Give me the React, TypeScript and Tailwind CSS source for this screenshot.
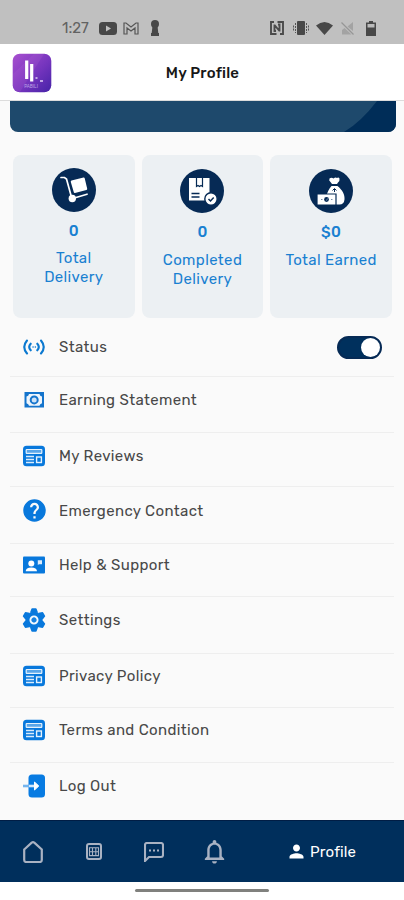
import { ReactNode, useState } from "react";
import { MdHelp, MdNotificationsNone, MdPerson } from "react-icons/md";

interface StatCard {
  value: string;
  label: ReactNode;
  icon: ReactNode;
  className: string;
  labelClass: string;
}

interface MenuItem {
  label: string;
  icon: ReactNode;
  rowClass: string;
  innerClass: string;
}

const TrolleyIcon = () => (
  <svg viewBox="0 0 44 44" className="size-11" fill="none">
    <path d="M9 9.5h3.5l2 1.5 5.5 20" stroke="#fff" strokeWidth="1.7" strokeLinecap="round" />
    <path d="M19.500 12.500 31.500 9.500q1-.2 1.200.8l2.500 10.500q.2 1-.8 1.300L23 25q-1 .2-1.200-.8L18.800 14q-.2-1.200.7-1.500Z" fill="#fff" />
    <path d="m24 29.500 11-3.300" stroke="#fff" strokeWidth="1.700" strokeLinecap="round" />
    <circle cx="20.300" cy="30.500" r="3.700" fill="#fff" />
  </svg>
);

const ParcelIcon = () => (
  <svg viewBox="0 0 44 44" className="size-11" fill="none">
    <path d="M9 9h20.500v22.500H9z" fill="#fff" />
    <path d="M16.500 9v8.500l1.500-1 1.500 1 1.500-1 1.500 1V9" stroke="#062a55" strokeWidth="1.200" />
    <path d="M11.500 24.500h8M11.500 28h8" stroke="#062a55" strokeWidth="1.300" />
    <circle cx="31" cy="30" r="6.200" fill="#fff" stroke="#062a55" strokeWidth="1.400" />
    <path d="m28.500 30 2 2 3.200-3.500" stroke="#062a55" strokeWidth="1.500" />
  </svg>
);

const MoneyIcon = () => (
  <svg viewBox="0 0 44 44" className="size-11" fill="none">
    <path d="M20.500 9.500q2-1.500 4 0 2-1.500 3.500-.5 1.500-1 2.500.5.500 2-1.500 4l-1 1.500h-5l-1.500-2q-2-1.500-1-3.500Z" fill="#fff" />
    <path d="M22.500 17h6c5 4 7.500 9 7 13.500q-.5 5-5 5H21c-4 0-5-3-4-7 1-5 3-8.500 5.500-11.500Z" fill="#fff" />
    <path d="m23.500 21.500 2-2 2 2M25.500 20v3" stroke="#062a55" />
    <path d="M8 25h19v11H8z" fill="#fff" stroke="#062a55" strokeWidth="1.200" />
    <circle cx="17.500" cy="30.500" r="2.400" fill="#062a55" />
    <path d="m18.500 29.500-1 2M12 30.500h1.500M22 30.500h1.500" stroke="#7690aa" />
  </svg>
);

const SignalIcon = () => (
  <svg viewBox="0 0 22 22" className="size-[22px]" fill="none" stroke="#0b79d0" strokeWidth="2.100" strokeLinecap="round">
    <path d="M4 4.500q-5.500 6.500 0 13M18 4.500q5.500 6.500 0 13M7.700 7.700q-3 3.300 0 6.600M14.300 7.700q3 3.300 0 6.600" />
    <path d="M10 11h.1M12.300 11h.1" strokeWidth="1.500" />
  </svg>
);

const BanknoteIcon = () => (
  <svg viewBox="0 0 22 22" className="size-[22px]" fill="none">
    <path d="M1.500 3h19.500v15.500h-19.500z" fill="#1474cc" />
    <path d="M6 5h10.500q.3 2 2.500 2.500v6.800q-2.200.5-2.500 2.500H6q-.3-2-2.500-2.500V7.500Q5.700 7 6 5Z" fill="#eef5fc" />
    <circle cx="11.200" cy="10.900" r="3.500" fill="#cfe3f7" stroke="#1474cc" strokeWidth="2" />
  </svg>
);

const NewsIcon = () => (
  <svg viewBox="0 0 22 22" className="size-[22px]" fill="none">
    <rect width="22" height="20.500" y=".8" rx="3.500" fill="#0878dc" />
    <rect x="3.200" y="4.500" width="15.600" height="3.800" rx=".6" fill="#5aa6e9" stroke="#e5f2fd" strokeWidth="1.200" />
    <path d="M3 11.500h8M3 14.500h8M3 17.500h8" stroke="#d9ebfb" strokeWidth="1.300" />
    <rect x="13.600" y="12" width="4.800" height="5.500" stroke="#e5f2fd" strokeWidth="1.400" />
  </svg>
);

const ContactCardIcon = () => (
  <svg viewBox="0 0 22 22" className="size-[22px]" fill="#fff">
    <path d="M1 2.500h20q1 0 1 1v15q0 1-1 1H1q-1 0-1-1v-15q0-1 1-1Z" fill="#0878dc" />
    <circle cx="8.300" cy="9.500" r="3" />
    <path d="M2.700 17.300q0-3.800 5.600-3.800t5.700 3.800Z" />
    <path d="M14.800 6.200h4.200v4h-3l-1.200.8Z" fill="#dcecfb" />
  </svg>
);

const GearIcon = () => (
  <svg viewBox="-12 -12 24 24" className="size-6 shrink-0" fill="#0878dc">
    <circle r="8.600" />
    {[0, 60, 120, 180, 240, 300].map((angle) => (
      <path key={angle} d="M-4-7.500-2.600-11.300q.2-.4.700-.4h3.800q.5 0 .7.4L4-7.500Z" transform={`rotate(${angle})`} />
    ))}
    <circle r="3.600" fill="#1681df" stroke="#f2f8fe" strokeWidth="1.900" />
  </svg>
);

const LogOutIcon = () => (
  <svg viewBox="0 0 22 24" className="h-6 w-[22px]" fill="none">
    <rect x="5.500" y=".5" width="16.500" height="23" rx="3.500" fill="#087be2" />
    <path d="M0 12h6" stroke="#75b5ef" strokeWidth="2.600" />
    <path d="M6 12h7" stroke="#d5eafd" strokeWidth="2.600" />
    <path d="m11.500 8 4.300 4-4.300 4Z" fill="#fff" stroke="#fff" />
  </svg>
);

const stats: StatCard[] = [
  { value: "0", label: <>Total<br />Delivery</>, icon: <TrolleyIcon />, className: "pt-[13px]", labelClass: "mt-2" },
  { value: "0", label: "Completed Delivery", icon: <ParcelIcon />, className: "pt-3.5", labelClass: "mt-[9px]" },
  { value: "$0", label: "Total Earned", icon: <MoneyIcon />, className: "pt-3.5", labelClass: "mt-[9px]" },
];

const menuItems: MenuItem[] = [
  { label: "Earning Statement", icon: <BanknoteIcon />, rowClass: "h-14", innerClass: "h-[46px]" },
  { label: "My Reviews", icon: <NewsIcon />, rowClass: "h-[54px]", innerClass: "h-[45px]" },
  {
    label: "Emergency Contact",
    icon: <MdHelp className="size-[27px] shrink-0 text-[#0878dc]" />,
    rowClass: "h-[57px]",
    innerClass: "h-[47px]",
  },
  { label: "Help & Support", icon: <ContactCardIcon />, rowClass: "h-[53px]", innerClass: "h-[42px]" },
  { label: "Settings", icon: <GearIcon />, rowClass: "h-[57px]", innerClass: "h-[46px]" },
  { label: "Privacy Policy", icon: <NewsIcon />, rowClass: "h-[54px]", innerClass: "h-11" },
  { label: "Terms and Condition", icon: <NewsIcon />, rowClass: "h-[55px]", innerClass: "h-11" },
  { label: "Log Out", icon: <LogOutIcon />, rowClass: "h-14", innerClass: "h-[46px]" },
];

const StatusBar = () => (
  <div className="flex h-11 items-start justify-between bg-[#c0c0c0] pl-[62px] pr-[28px] pt-[18px]">
    <div className="flex h-5 items-center">
      <span className="w-[37px] text-[15px] leading-5 text-[#626262]">1:27</span>
      <svg viewBox="0 0 18 13" className="h-[13px] w-[18px]">
        <rect width="18" height="13" rx="3.500" fill="#484848" />
        <path d="m7 3.500 5 3-5 3Z" fill="#c0c0c0" />
      </svg>
      <svg viewBox="0 0 16 13" className="ml-1.5 h-[13px] w-4" fill="none" stroke="#555">
        <path d="M1 12V1h2l5 4 5-4h2v11h-3V6l-4 3-4-3v6Z" strokeWidth="1.200" />
      </svg>
      <svg viewBox="0 0 10 16" className="ml-[11px] h-4 w-2.5" fill="#484848">
        <circle cx="5" cy="4" r="4" />
        <path d="M2.500 6h5l.8 7H9v3H1v-3h.7Z" />
      </svg>
    </div>
    <div className="flex h-5 items-center">
      <svg viewBox="0 0 14 14" className="size-3.5" fill="none" stroke="#4b4b4b" strokeWidth="1.900">
        <path d="M4 1H1v12h5.500M7.500 1H13v12h-3M4.500 3.500v6.500h1.500M9.500 10.500V3.500H8M4.500 4l5 6" />
      </svg>
      <svg viewBox="0 0 16 14" className="ml-[9px] h-3.5 w-4" fill="#484848">
        <rect x="4" width="8" height="14" rx="1" />
        <path d="M2.500 2v10M.5 4.500v5M13.500 2v10M15.500 4.500v5" stroke="#555" strokeDasharray="2 1" />
      </svg>
      <svg viewBox="0 0 17 13" className="ml-[7px] h-[13px] w-[17px]" fill="#484848">
        <path d="M0 3.500q8.500-7 17 0L8.500 13Z" />
      </svg>
      <svg viewBox="0 0 13 14" className="ml-2 h-3.5 w-[13px]" fill="#a3a3a3">
        <path d="M12 1v9L6.500 5.500ZM3.500 7l7 6.500H1V9Z" />
        <path d="m.5 1.500 12 12" stroke="#969696" strokeWidth="1.300" />
      </svg>
      <svg viewBox="0 0 10 15" className="ml-3 h-[15px] w-2.5">
        <path d="M3 0h4v1.500h3V15H0V1.500h3Z" fill="#484848" />
        <path d="M1.500 3h7v3.500h-7Z" fill="#bbb" />
      </svg>
    </div>
  </div>
);

const AppLogo = () => (
  <svg viewBox="0 0 40 40" className="mt-px size-10">
    <defs>
      <linearGradient id="logo" x1="0" y1="0" x2="1" y2="1">
        <stop offset="0" stopColor="#a950d0" />
        <stop offset=".55" stopColor="#7635be" />
        <stop offset="1" stopColor="#4522a7" />
      </linearGradient>
    </defs>
    <rect x=".7" y=".7" width="38.600" height="38.600" rx="7" fill="url(#logo)" />
    <path d="M1 21 22 1h10L8 39Q1 39 1 32Z" fill="#bd67d8" opacity=".18" />
    <path d="M14.700 7.500V26M19.700 11V28.500" stroke="#fff" strokeWidth="3.200" />
    <path d="M23.500 25h2M28 28h3" stroke="#ded0f3" strokeWidth="1.500" />
    <text x="19" y="34.500" fontSize="4.500" fill="#bda3e5" textAnchor="middle">PABILI</text>
  </svg>
);

const BottomNav = () => (
  <nav className="flex h-[62px] items-center border-t border-[#001d45] bg-[#002f5c] pl-[23px] text-[#a9b2c2]">
    <svg viewBox="0 0 20 22" className="h-[22px] w-5" fill="none" stroke="currentColor" strokeWidth="2.200">
      <path d="M1.200 8.500 8.700 1.700q1.300-1 2.600 0l7.500 6.800V19q0 2-2 2H3.200q-2 0-2-2Z" />
    </svg>
    <svg viewBox="0 0 16 17" className="ml-[43px] h-[17px] w-4" fill="none" stroke="currentColor">
      <rect x="1" y="1" width="14" height="15" rx="2" strokeWidth="2" />
      <path d="M3.500 4.800h9v7.800h-9ZM3.500 8.700h9M6.500 4.800v7.800M9.800 4.800v7.800" strokeWidth="1.100" />
    </svg>
    <svg viewBox="0 0 20 20" className="ml-[42px] size-5" fill="none" stroke="currentColor">
      <path d="M1 19V3q0-2 2-2h14q2 0 2 2v10q0 2-2 2H5Z" strokeWidth="2.100" />
      <path d="M5 8.500h2M9 8.500h2M13 8.500h2" strokeWidth="2" />
    </svg>
    <MdNotificationsNone className="ml-[36px] size-[29px]" />
    <div className="ml-[57px] flex items-center text-white">
      <MdPerson className="size-[21px]" />
      <span className="ml-[3px] text-[15px] leading-5 tracking-[0.15px]">Profile</span>
    </div>
  </nav>
);

const App = () => {
  const [online, setOnline] = useState(true);

  return (
    <div className="flex h-[900px] w-[404px] flex-col overflow-hidden bg-[#fafafa] font-['Rubik','Roboto',sans-serif] text-[#484848]">
      <StatusBar />
      <header className="grid h-[57px] grid-cols-[40px_1fr_40px] items-center border-b border-[#dcdcdc] bg-white px-3">
        <AppLogo />
        <h1 className="pl-px pt-[3px] text-center text-[15px] font-medium tracking-[0.2px] text-[#171717]">My Profile</h1>
      </header>

      <main className="flex flex-1 flex-col">
        <div className="ml-2.5 h-[31px] w-[386px] shrink-0 overflow-hidden rounded-b-lg bg-[#1e496c]">
          <svg viewBox="0 0 386 31" className="h-[31px] w-[386px]">
            <path d="M334 31q17-10 33-31h19v31Z" fill="#002d58" />
          </svg>
        </div>

        <section className="mt-[23px] grid h-[163px] shrink-0 grid-cols-3 gap-[7px] pl-[13px] pr-3">
          {stats.map((stat, index) => (
            <div
              key={index}
              className={`flex flex-col items-center rounded-lg bg-[#ecf0f3] text-center text-[#1980d1] ${stat.className}`}
            >
              <div className="rounded-full bg-[#062a55]">{stat.icon}</div>
              <p className="mt-[9px] text-[15px] font-medium leading-5 tracking-[0.3px]">{stat.value}</p>
              <p className={`w-[104px] text-[15px] leading-[19px] tracking-[0.37px] ${stat.labelClass}`}>{stat.label}</p>
            </div>
          ))}
        </section>

        <div className="mx-2.5 flex h-[59px] shrink-0 items-center border-b border-[#eeeeee] pl-[13px] pr-3">
          <SignalIcon />
          <span className="ml-3.5 flex-1 pt-px text-[15px] tracking-[0.37px]">Status</span>
          <button
            type="button"
            role="switch"
            aria-checked={online}
            aria-label="Status"
            onClick={() => setOnline(!online)}
            className={`flex h-[23px] w-[45px] items-center rounded-full border-2 border-[#062a55] bg-[#00305d] ${
              online ? "justify-end" : "justify-start"
            }`}
          >
            <span className="size-[19px] rounded-full bg-white" />
          </button>
        </div>
        {menuItems.map((item) => (
          <div
            key={item.label}
            className={`mx-2.5 shrink-0 border-b border-[#eeeeee] pl-[13px] last:border-0 ${item.rowClass}`}
          >
            <div className={`flex items-center ${item.innerClass}`}>
              <span className="flex w-[22px] shrink-0 justify-center">{item.icon}</span>
              <span className="ml-3.5 whitespace-nowrap pt-px text-[15px] tracking-[0.37px]">{item.label}</span>
            </div>
          </div>
        ))}
      </main>

      <BottomNav />
      <div className="flex h-[18px] justify-center bg-white pt-[7px]">
        <div className="h-[3px] w-[134px] rounded-full bg-[#80817e]" />
      </div>
    </div>
  );
};

export default App;
